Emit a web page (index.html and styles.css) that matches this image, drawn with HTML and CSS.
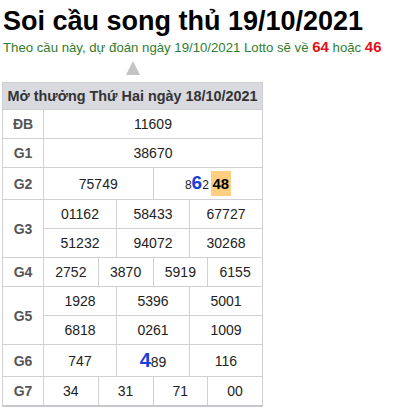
FILE: index.html
```html
<!DOCTYPE html>
<html lang="vi">
<head>
<meta charset="utf-8">
<link rel="stylesheet" href="styles.css">
</head>
<body>
<h1 class="title">Soi cầu song thủ 19/10/2021</h1>
<p class="sub">Theo cầu này, dự đoán ngày 19/10/2021 Lotto sẽ về <b class="red">64</b> hoặc <b class="red">46</b></p>
<div class="arrow-row"><span class="arrow"></span></div>
<table class="kq">
<colgroup>
<col class="c-label">
<col><col><col><col><col><col><col><col><col><col><col><col>
</colgroup>
<thead>
<tr><th colspan="13" class="head">Mở thưởng Thứ Hai ngày 18/10/2021</th></tr>
</thead>
<tbody>
<tr><td class="lb">ĐB</td><td colspan="12">11609</td></tr>
<tr><td class="lb">G1</td><td colspan="12">38670</td></tr>
<tr class="tall"><td class="lb">G2</td><td colspan="6">75749</td><td colspan="6"><span class="sm">8</span><span class="blue b6">6</span><span class="sm">2</span><span class="hl">48</span></td></tr>
<tr><td class="lb" rowspan="2">G3</td><td colspan="4">01162</td><td colspan="4">58433</td><td colspan="4">67727</td></tr>
<tr><td colspan="4">51232</td><td colspan="4">94072</td><td colspan="4">30268</td></tr>
<tr><td class="lb">G4</td><td colspan="3">2752</td><td colspan="3">3870</td><td colspan="3">5919</td><td colspan="3">6155</td></tr>
<tr><td class="lb" rowspan="2">G5</td><td colspan="4">1928</td><td colspan="4">5396</td><td colspan="4">5001</td></tr>
<tr><td colspan="4">6818</td><td colspan="4">0261</td><td colspan="4">1009</td></tr>
<tr class="tall"><td class="lb">G6</td><td colspan="4">747</td><td colspan="4"><span class="blue b4">4</span><span>89</span></td><td colspan="4">116</td></tr>
<tr><td class="lb">G7</td><td colspan="3">34</td><td colspan="3">31</td><td colspan="3">71</td><td colspan="3">00</td></tr>
</tbody>
</table>
</body>
</html>
```
FILE: styles.css
```css
body {
  margin: 0;
  padding: 0 2px;
  font-family: "Liberation Sans", Arial, sans-serif;
  color: #222;
  background: #fff;
}
.title {
  margin: 4px 0 0 1px;
  font-size: 27px;
  font-weight: bold;
  color: #000;
  line-height: 34px;
}
.sub {
  margin: 0 0 0 1px;
  font-size: 13.2px;
  color: #2f7d2f;
  line-height: 18px;
}
.red {
  color: #e0121a;
  font-size: 15px;
}
.arrow-row {
  width: 261px;
  display: flex;
  justify-content: center;
  padding-top: 4px;
  height: 15px;
  margin-bottom: 6px;
}
.arrow {
  width: 0;
  height: 0;
  border-left: 7.5px solid transparent;
  border-right: 7.5px solid transparent;
  border-bottom: 14px solid #c4c4c4;
}
.kq {
  width: 261px;
  border-collapse: collapse;
  table-layout: fixed;
  border-bottom: 2px solid #c8c8cc;
}
.c-label { width: 41px; }
.kq th, .kq td {
  border: 1px solid #cfcfd4;
  text-align: center;
  padding: 0;
  height: 28px;
  font-size: 14px;
}
.kq th.head {
  background: #d9d9e0;
  font-size: 14.4px;
  color: #333;
  height: 26px;
  white-space: nowrap;
}
.kq td.lb {
  font-weight: bold;
  color: #555;
  font-size: 14px;
}
.kq tr.tall td { height: 31px; }
.sm { font-size: 12px; }
.blue {
  color: #1740d6;
  font-weight: bold;
}
.b6 { font-size: 19px; }
.b4 { font-size: 20px; }
.hl {
  display: inline-block;
  background: #ffcf80;
  font-weight: bold;
  font-size: 15px;
  color: #000;
  padding: 0 1.5px;
  line-height: 25px;
  margin-left: 2px;
}
```
